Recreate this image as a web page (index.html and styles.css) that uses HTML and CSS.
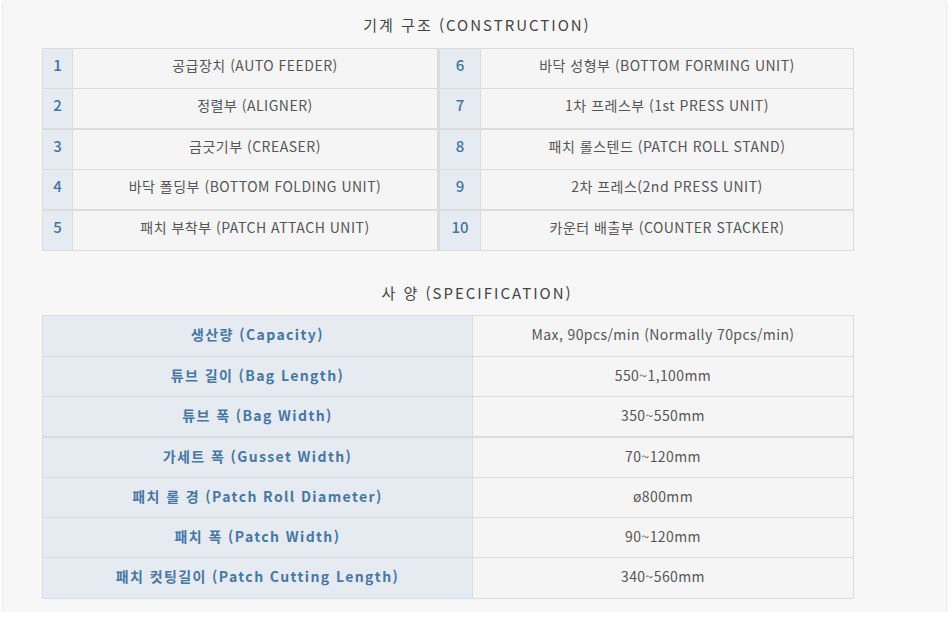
FILE: index.html
```html
<!DOCTYPE html>
<html lang="ko">
<head>
<meta charset="utf-8">
<title>기계 구조 / 사양</title>
<link rel="stylesheet" href="styles.css">
</head>
<body>
<div class="card">
  <h2 class="title">기계 구조 (CONSTRUCTION)</h2>
  <table class="cons">
    <colgroup><col class="c-num1"><col class="c-txt1"><col class="c-num2"><col class="c-txt2"></colgroup>
    <tr><td class="num">1</td><td>공급장치 (AUTO FEEDER)</td><td class="num mid">6</td><td>바닥 성형부 (BOTTOM FORMING UNIT)</td></tr>
    <tr><td class="num">2</td><td>정렬부 (ALIGNER)</td><td class="num mid">7</td><td>1차 프레스부 (1st PRESS UNIT)</td></tr>
    <tr class="thick"><td class="num">3</td><td>금긋기부 (CREASER)</td><td class="num mid">8</td><td>패치 롤스텐드 (PATCH ROLL STAND)</td></tr>
    <tr><td class="num">4</td><td>바닥 폴딩부 (BOTTOM FOLDING UNIT)</td><td class="num mid">9</td><td>2차 프레스(2nd PRESS UNIT)</td></tr>
    <tr class="thick"><td class="num">5</td><td>패치 부착부 (PATCH ATTACH UNIT)</td><td class="num mid">10</td><td>카운터 배출부 (COUNTER STACKER)</td></tr>
  </table>

  <h2 class="title title2">사 양 (SPECIFICATION)</h2>
  <table class="spec">
    <colgroup><col class="s-lab"><col class="s-val"></colgroup>
    <tr class="first"><th>생산량 (Capacity)</th><td>Max, 90pcs/min (Normally 70pcs/min)</td></tr>
    <tr><th>튜브 길이 (Bag Length)</th><td>550~1,100mm</td></tr>
    <tr><th>튜브 폭 (Bag Width)</th><td>350~550mm</td></tr>
    <tr class="thick"><th>가세트 폭 (Gusset Width)</th><td>70~120mm</td></tr>
    <tr><th>패치 롤 경 (Patch Roll Diameter)</th><td>ø800mm</td></tr>
    <tr><th>패치 폭 (Patch Width)</th><td>90~120mm</td></tr>
    <tr class="last"><th>패치 컷팅길이 (Patch Cutting Length)</th><td>340~560mm</td></tr>
  </table>
</div>
</body>
</html>
```

FILE: styles.css
```css
html, body {
  margin: 0;
  padding: 0;
  background: #ffffff;
}
body {
  font-family: "Noto Sans CJK KR", "Noto Sans", sans-serif;
  color: #555;
}
.card {
  width: 943px;
  margin-left: 3px;
  height: 612px;
  box-sizing: border-box;
  background: #f7f7f7;
  box-shadow: 0 1px 3px rgba(0, 0, 0, 0.18);
  padding: 14px 0 0 39px;
}
.title {
  margin: 0 0 12px 0;
  width: 870px;
  text-align: center;
  font-size: 15px;
  line-height: 22px;
  font-weight: 400;
  letter-spacing: 2px;
  color: #444;
}
.title2 {
  margin-top: 31px;
  margin-bottom: 11px;
}
table {
  border-collapse: collapse;
  width: 811px;
  table-layout: fixed;
  font-size: 14px;
  letter-spacing: 0.5px;
}
td, th {
  border: 1px solid #dcdcdc;
  text-align: center;
  padding: 7px 0 14px;
  line-height: 18px;
  height: 18px;
}
.cons td { background: #f5f5f5; }
.c-num1 { width: 30px; }
.c-txt1 { width: 366px; }
.c-num2 { width: 42px; }
.c-txt2 { width: 373px; }
.cons td.num {
  background: #e6ebf2;
  color: #3f74a6;
  font-weight: 500;
  font-size: 15px;
  letter-spacing: 0;
}
.cons td.mid {
  border-left: 3px solid #dcdcdc;
}
tr.thick td, tr.thick th {
  border-top: 2px solid #dcdcdc;
}
.s-lab { width: 430px; }
.s-val { width: 381px; }
.spec th, .spec td {
  padding: 8px 0 12px;
  height: 19px;
}
.spec tr.first th, .spec tr.first td {
  padding-bottom: 13px;
}
.spec tr.last th, .spec tr.last td {
  padding-bottom: 13px;
}
.spec th {
  background: #e6ebf2;
  color: #4677a5;
  font-weight: 700;
  font-size: 14px;
  letter-spacing: 1.4px;
}
.spec td {
  background: #f5f5f5;
  color: #555;
  letter-spacing: 0.4px;
}
```
